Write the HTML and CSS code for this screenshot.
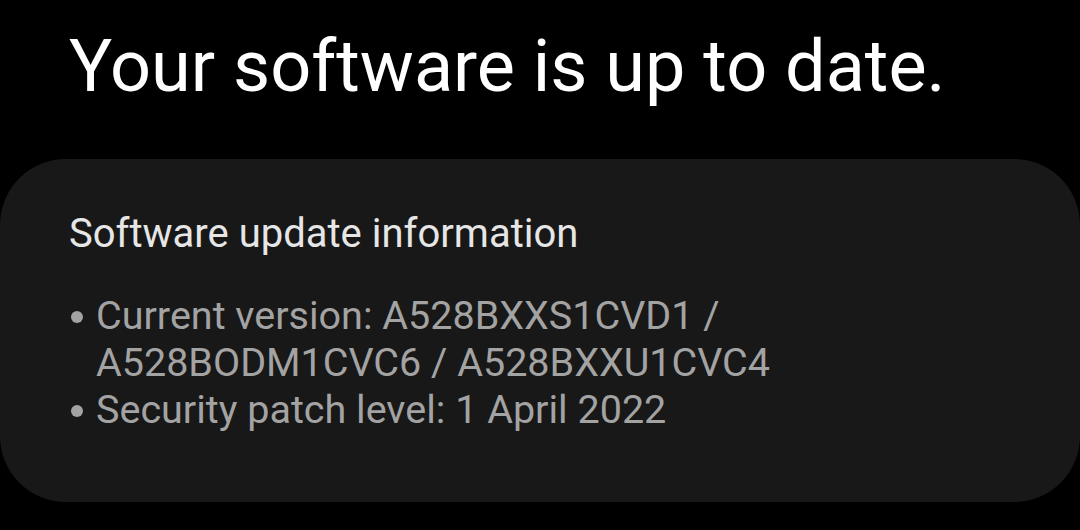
FILE: index.html
```html
<!DOCTYPE html>
<html lang="en">
<head>
    <meta charset="UTF-8">
    <meta name="viewport" content="width=device-width, initial-scale=1.0">
    <title>Software update</title>
    <link rel="stylesheet" href="styles.css">
</head>
<body>
    <h1 class="status">Your software is up to date.</h1>
    <div class="card">
        <h2 class="card-title">Software update information</h2>
        <ul class="info-list">
            <li>Current version: A528BXXS1CVD1 / A528BODM1CVC6 / A528BXXU1CVC4</li>
            <li>Security patch level: 1 April 2022</li>
        </ul>
    </div>
</body>
</html>
```

FILE: styles.css
```css
body {
    margin: 0;
    background: #000;
    font-family: Roboto, "Noto Sans", sans-serif;
    width: 1080px;
    height: 530px;
    overflow: hidden;
}
.status {
    margin: 0;
    padding: 27px 0 0 69px;
    height: 159px;
    box-sizing: border-box;
    font-size: 72px;
    font-weight: 400;
    line-height: 80px;
    color: #fff;
}
.card {
    height: 343px;
    box-sizing: border-box;
    background: #181818;
    border-radius: 66px;
    padding: 52px 60px 0 69px;
}
.card-title {
    margin: 0;
    font-size: 40px;
    font-weight: 400;
    line-height: 46px;
    color: #e6e6e6;
}
.info-list {
    list-style: none;
    margin: 35px 0 0;
    padding: 0;
    color: #a3a3a3;
    font-size: 39.5px;
    line-height: 47px;
}
.info-list li {
    position: relative;
    padding-left: 27px;
    max-width: 720px;
}
.info-list li::before {
    content: "";
    position: absolute;
    left: 2px;
    top: 19px;
    width: 12px;
    height: 12px;
    border-radius: 50%;
    background: #a3a3a3;
}
```
